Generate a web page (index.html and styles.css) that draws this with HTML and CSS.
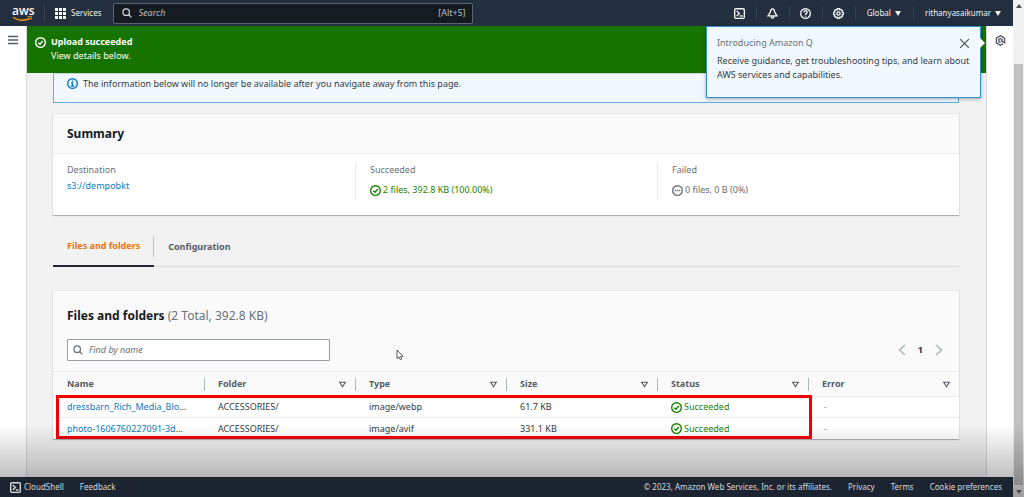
FILE: index.html
```html
<!DOCTYPE html>
<html lang="en">
<head>
<meta charset="utf-8">
<title>Upload: status</title>
<link rel="stylesheet" href="styles.css">
</head>
<body>
<svg class="defs" aria-hidden="true">
  <symbol id="check" viewBox="0 0 16 16"><circle cx="8" cy="8" r="7"/><path d="M4.700 8.200 7.200 10.500 11.300 5.800"/></symbol>
  <symbol id="search" viewBox="0 0 16 16"><circle cx="6.700" cy="6.700" r="5.200"/><path d="M10.500 10.500 15 15"/></symbol>
  <symbol id="shell" viewBox="0 0 16 16"><rect x="1" y="1" width="14" height="14" rx="1.500"/><path d="M4 4.500 7.800 8 4 11.500M8.500 11.700h4"/></symbol>
  <symbol id="sort" viewBox="0 0 16 16"><path d="M3 4h10L8 12z"/></symbol>
</svg>
<div class="window">
  <div class="page">
    <header class="topbar">
      <a class="logo" href="#" aria-label="AWS home"><span class="logo-text">aws</span>
        <svg class="smile" viewBox="0 0 22 6"><path d="M1 1.200c5.500 3.900 13 4 18 .8" fill="none" stroke="#f90" stroke-width="1.500"/><path d="M16.500.6c2-.5 3.500-.4 3.900 0 .3.500-.1 2.300-1.300 3.500" fill="none" stroke="#f90"/></svg>
      </a>
      <button class="services"><svg class="icon-grid" viewBox="0 0 11 11"><path d="M0 0h3v3H0zM4 0h3v3H4zM8 0h3v3H8zM0 4h3v3H0zM4 4h3v3H4zM8 4h3v3H8zM0 8h3v3H0zM4 8h3v3H4zM8 8h3v3H8z"/></svg>Services</button>
      <label class="search"><svg class="icon small"><use href="#search"/></svg><input type="search" placeholder="Search" aria-label="Search"><kbd>[Alt+S]</kbd></label>
      <nav class="tools">
        <button class="tool" aria-label="CloudShell"><svg class="icon"><use href="#shell"/></svg></button>
        <button class="tool" aria-label="Notifications"><svg class="icon" viewBox="0 0 16 16"><path d="M8 1.200C5.500 1.200 5 3.500 5 6L1.500 11.500h13L11 6c0-2.500-.5-4.800-3-4.800zM6.200 11.500v1.700c0 2 3.600 2 3.600 0v-1.700"/></svg></button>
        <button class="tool" aria-label="Help"><svg class="icon" viewBox="0 0 16 16"><circle cx="8" cy="8" r="7"/><path d="M5.700 6.500C5.700 3 10.400 3.200 10.400 6.200 10.400 8 8 7.800 8 10M8 11.300v1.500"/></svg></button>
        <button class="tool" aria-label="Settings"><svg class="icon" viewBox="0 0 16 16"><path d="M6.500 1h3l.5 1.700 1.700-.6 2.200 2.200-.7 1.600 1.800.6v3l-1.800.6.7 1.600-2.200 2.200-1.700-.6-.5 1.700h-3L6 13.300l-1.700.6-2.200-2.200.7-1.600L1 9.500v-3l1.800-.6-.7-1.600 2.200-2.200 1.700.6z"/><circle cx="8" cy="8" r="2.300"/></svg></button>
        <button class="menu region">Global <span class="caret"></span></button>
        <button class="menu account">rithanyasaikumar <span class="caret"></span></button>
      </nav>
    </header>

    <div class="body">
      <aside class="rail left"><button aria-label="Open navigation"><svg class="burger" viewBox="0 0 10 10"><path d="M0 1.500h10M0 5h10M0 8.500h10"/></svg></button></aside>
      <main class="main">
        <section class="flash" role="status">
          <svg class="icon"><use href="#check"/></svg>
          <div><strong>Upload succeeded</strong><p>View details below.</p></div>
        </section>
        <div class="content">
          <div class="alert"><svg class="icon" viewBox="0 0 16 16"><circle cx="8" cy="8" r="7"/><path d="M8 3.500v2M6 7.200h2v4M5.800 11.700h4.600"/></svg>The information below will no longer be available after you navigate away from this page.</div>

          <section class="card summary">
            <h2>Summary</h2>
            <dl>
              <div><dt>Destination</dt><dd><a href="#">s3://dempobkt</a></dd></div>
              <div><dt>Succeeded</dt><dd class="state ok"><svg class="icon"><use href="#check"/></svg>2 files, 392.8 KB (100.00%)</dd></div>
              <div><dt>Failed</dt><dd class="state"><svg class="icon" viewBox="0 0 16 16"><circle cx="8" cy="8" r="7"/><path d="M4 8h2M7 8h2M10 8h2"/></svg>0 files, 0 B (0%)</dd></div>
            </dl>
          </section>

          <div class="tabs" role="tablist">
            <button class="tab active" role="tab" aria-selected="true">Files and folders</button>
            <button class="tab" role="tab" aria-selected="false">Configuration</button>
          </div>

          <section class="card files">
            <div class="files-head">
              <h2>Files and folders <span>(2 Total, 392.8 KB)</span></h2>
              <div class="filter-row">
                <label class="filter"><svg class="icon small"><use href="#search"/></svg><input type="text" placeholder="Find by name" aria-label="Find by name"></label>
                <nav class="pager" aria-label="Pagination">
                  <button aria-label="Previous page"><svg viewBox="0 0 8 12"><path d="M7 1 1.500 6 7 11"/></svg></button>
                  <button class="current">1</button>
                  <button aria-label="Next page"><svg viewBox="0 0 8 12"><path d="M1 1l5.500 5L1 11"/></svg></button>
                </nav>
              </div>
            </div>
            <table>
              <thead><tr>
                <th>Name</th>
                <th><div>Folder<svg><use href="#sort"/></svg></div></th>
                <th><div>Type<svg><use href="#sort"/></svg></div></th>
                <th><div>Size<svg><use href="#sort"/></svg></div></th>
                <th><div>Status<svg><use href="#sort"/></svg></div></th>
                <th><div>Error<svg><use href="#sort"/></svg></div></th>
              </tr></thead>
              <tbody>
                <tr><td><a href="#">dressbarn_Rich_Media_Blo</a>…</td><td>ACCESSORIES/</td><td>image/webp</td><td>61.7 KB</td><td><span class="state ok"><svg class="icon"><use href="#check"/></svg>Succeeded</span></td><td class="none">-</td></tr>
                <tr><td><a href="#">photo-1606760227091-3d</a>…</td><td>ACCESSORIES/</td><td>image/avif</td><td>331.1 KB</td><td><span class="state ok"><svg class="icon"><use href="#check"/></svg>Succeeded</span></td><td class="none">-</td></tr>
              </tbody>
            </table>
            <div class="highlight"></div>
          </section>
        </div>
      </main>
      <aside class="rail right"><button aria-label="Amazon Q"><svg class="icon" viewBox="0 0 16 16"><path d="M11.500 13 8 15l-6-3.500v-7L8 1l6 3.500v7L8.500 8.300"/><path d="M10.500 8.500V6.600L8 5 5.500 6.500v3L8 11"/></svg></button></aside>
      <div class="popover" role="dialog" aria-label="Introducing Amazon Q">
        <div class="popover-head"><span>Introducing Amazon Q</span><button aria-label="Close"><svg viewBox="0 0 10 10"><path d="M1 1l8 8M9 1 1 9"/></svg></button></div>
        <p>Receive guidance, get troubleshooting tips, and learn about AWS services and capabilities.</p>
      </div>
    </div>

    <footer class="footer">
      <button class="shell"><svg class="icon"><use href="#shell"/></svg>CloudShell</button>
      <a href="#">Feedback</a>
      <span class="copyright">© 2023, Amazon Web Services, Inc. or its affiliates.</span>
      <a href="#">Privacy</a><a href="#">Terms</a><a href="#">Cookie preferences</a>
    </footer>
  </div>
  <div class="scrollbar" aria-hidden="true"><span class="arrow up"></span><span class="thumb"></span><span class="arrow down"></span></div>
  <div class="shade"></div>
  <svg class="cursor" viewBox="0 0 8 12" aria-hidden="true"><path d="M1 1v8.500l2-1.600 1.300 2.800 1.500-.7-1.200-2.700H7z"/></svg>
</div>
</body>
</html>
```
FILE: styles.css
```css
* { box-sizing: border-box; }
body, h2, p, dl, dd { margin: 0; }
body { font: 9px/14px "Noto Sans", "Open Sans", sans-serif; color: #343b44; background: #f2f2f2; }
button, input, kbd { font: inherit; color: inherit; }
button { padding: 0; border: 0; background: none; display: flex; align-items: center; }
input { border: 0; padding: 0; background: none; outline: 0; min-width: 0; flex: 1; }
a { color: #0f7ac4; text-decoration: none; }
svg { fill: none; stroke: currentColor; flex: none; }
.defs { position: absolute; width: 0; height: 0; }
.icon { width: 11px; height: 11px; stroke-width: 2; }
.icon.small { width: 10px; height: 10px; }

.window { position: relative; display: flex; min-height: 100vh; }
.page { flex: 1; min-width: 0; display: flex; flex-direction: column; }

.topbar { height: 26px; display: flex; align-items: center; background: #232f3e; color: #f2f3f3; font-size: 8px; }
.logo { width: 45px; padding-left: 12px; height: 16px; border-right: 1px solid #37414f; color: #fff; display: flex; flex-direction: column; }
.logo-text { font: 600 12px/11px "Open Sans", sans-serif; }
.smile { width: 21px; height: 6px; }
.services { gap: 5px; padding: 0 11px 0 10px; }
.icon-grid { width: 11px; height: 11px; fill: #fff; stroke: none; }
.search { width: 360px; height: 21px; display: flex; align-items: center; gap: 7px; padding: 0 6px 0 8px; border: 1px solid #5c656f; border-radius: 2px; background: #161b22; color: #b6bec6; font-size: 9px; }
.search .icon { color: #d5dbdb; }
.search input::placeholder, .filter input::placeholder { color: inherit; font-style: italic; opacity: 1; }
.tools { margin-left: auto; display: flex; align-items: center; }
.tool { width: 33px; height: 14px; justify-content: center; border-right: 1px solid #37414f; }
.menu { height: 14px; gap: 4px; }
.region { padding: 0 12px 0 11px; border-right: 1px solid #37414f; }
.account { padding: 0 12px 0 11px; }
.caret { border: 3px solid transparent; border-top: 5px solid #f2f3f3; border-bottom: 0; }

.body { position: relative; flex: 1; display: flex; }
.rail { width: 27px; background: #fff; color: #545b64; padding-top: 9px; }
.rail button { margin: auto; }
.left { border-right: 1px solid #d5dbdb; }
.right { border-left: 1px solid #d5dbdb; }
.burger { width: 10px; height: 10px; stroke-width: 1.500; }
.main { flex: 1; min-width: 0; }
.flash { display: flex; gap: 5px; padding: 9px 8px 10px; background: #177300; color: #fff; }
.flash .icon { margin-top: 2px; }
.content { padding: 0 27px 38px 26px; }
.alert { display: flex; align-items: flex-start; gap: 5px; padding: 3px 13px 11px; border: 1px solid #5bafd8; border-top-color: #c8d4dc; background: #f1f8ff; }
.alert .icon { margin-top: 1px; color: #0f7ac4; }

.card { position: relative; background: #fff; box-shadow: 0 1px 1px #aab0b4, 0 0 1px #c0c5c8; }
.card h2 { font-size: 12px; line-height: 18px; color: #16191f; }
.card h2 span { font-weight: 400; color: #687078; }
.summary { margin-top: 11px; }
.summary h2 { padding: 11px 14px 10px; background: #fafafa; border-bottom: 1px solid #eee; }
.summary dl { display: grid; grid-template-columns: repeat(3, 1fr); padding: 9px 0 14px; }
.summary dl > div { height: 38px; padding-left: 14px; }
.summary dl > div + div { border-left: 1px solid #eaeded; }
dt { color: #687078; margin-bottom: 2px; }
dd.state { padding-top: 4px; }
.state { display: flex; align-items: center; gap: 2px; color: #687078; }
.ok { color: #1d8102; }

.tabs { display: flex; margin-top: 14px; border-bottom: 1px solid #d5dbdb; font-weight: 700; }
.tab { position: relative; padding: 10px 14px 12px; color: #545b64; }
.tab.active { color: #ec7211; border-bottom: 2px solid #232a33; margin-bottom: -1px; }
.tab.active::after { content: ""; position: absolute; right: 0; top: 7px; height: 21px; border-right: 1px solid #bcc3c7; }

.files { margin-top: 24px; }
.files-head { padding: 16px 14px 10px; background: #fafafa; }
.filter-row { display: flex; justify-content: space-between; align-items: center; margin-top: 14px; }
.filter { width: 263px; height: 22px; display: flex; align-items: center; gap: 6px; padding: 0 5px; border: 1px solid #979ea3; border-radius: 1px; background: #fff; color: #687078; }
.pager { display: flex; gap: 12px; color: #aab7b8; padding-right: 2px; }
.pager svg { width: 8px; height: 12px; stroke-width: 1.500; }
.pager .current { color: #16325c; font-weight: 700; }
table { width: 100%; table-layout: fixed; border-collapse: separate; border-spacing: 0; }
th, td { text-align: left; white-space: nowrap; }
th { height: 26px; border-top: 1px solid #eaeded; border-bottom: 1px solid #eaeded; background: linear-gradient(#aab7b8, #aab7b8) 0 50% / 1px 13px no-repeat #fafafa; font-weight: 700; color: #545b64; padding: 0 8px 0 14px; }
th:first-child { background: #fafafa; }
th div { display: flex; justify-content: space-between; align-items: center; }
th svg { width: 9px; height: 9px; stroke-width: 2; }
td { height: 21px; padding: 0 0 0 14px; }
tbody tr:first-child td { border-bottom: 1px solid #eaeded; }
.none { color: #879196; padding-left: 16px; }
.highlight { position: absolute; left: 3px; bottom: 0; width: calc(500% / 6 + 1px); height: 44px; border: 3px solid #f00000; }

.popover { position: absolute; right: 32px; top: 0; width: 275px; padding: 9px 10px 15px; border: 1px solid #2b91d0; background: #f1f8ff; box-shadow: 0 1px 4px #00000055; }
.popover::after { content: ""; position: absolute; right: -5px; top: 11px; border: 5px solid transparent; border-left-color: #f1f8ff; border-right: 0; }
.popover-head { display: flex; justify-content: space-between; align-items: center; color: #687078; margin-bottom: 4px; }
.popover-head svg { width: 11px; height: 11px; color: #414750; }

.footer { height: 20px; display: flex; align-items: center; gap: 16px; padding: 0 11px 0 10px; background: #1b2430; color: #d5dbdb; font-size: 8px; z-index: 2; }
.footer a { color: inherit; }
.shell { gap: 3px; }
.copyright { margin-left: auto; }
.scrollbar { width: 11px; background: #f1f1f1; display: flex; flex-direction: column; align-items: center; }
.thumb { flex: 1; width: 9px; background: #c1c1c1; margin: 56px 0 5px; }
.arrow { border: 3px solid transparent; }
.up { border-bottom: 4px solid #505050; border-top: 0; margin-top: 4px; }
.down { border-top: 4px solid #707070; border-bottom: 0; margin-bottom: 3px; }
.shade { position: absolute; left: 0; right: 0; bottom: 0; height: 72px; pointer-events: none; background: linear-gradient(#0000, #0000003d 70%, #00000059); }
.cursor { position: absolute; left: 396px; top: 349px; width: 8px; height: 12px; fill: #fff; color: #333; stroke-width: .8; }
```
